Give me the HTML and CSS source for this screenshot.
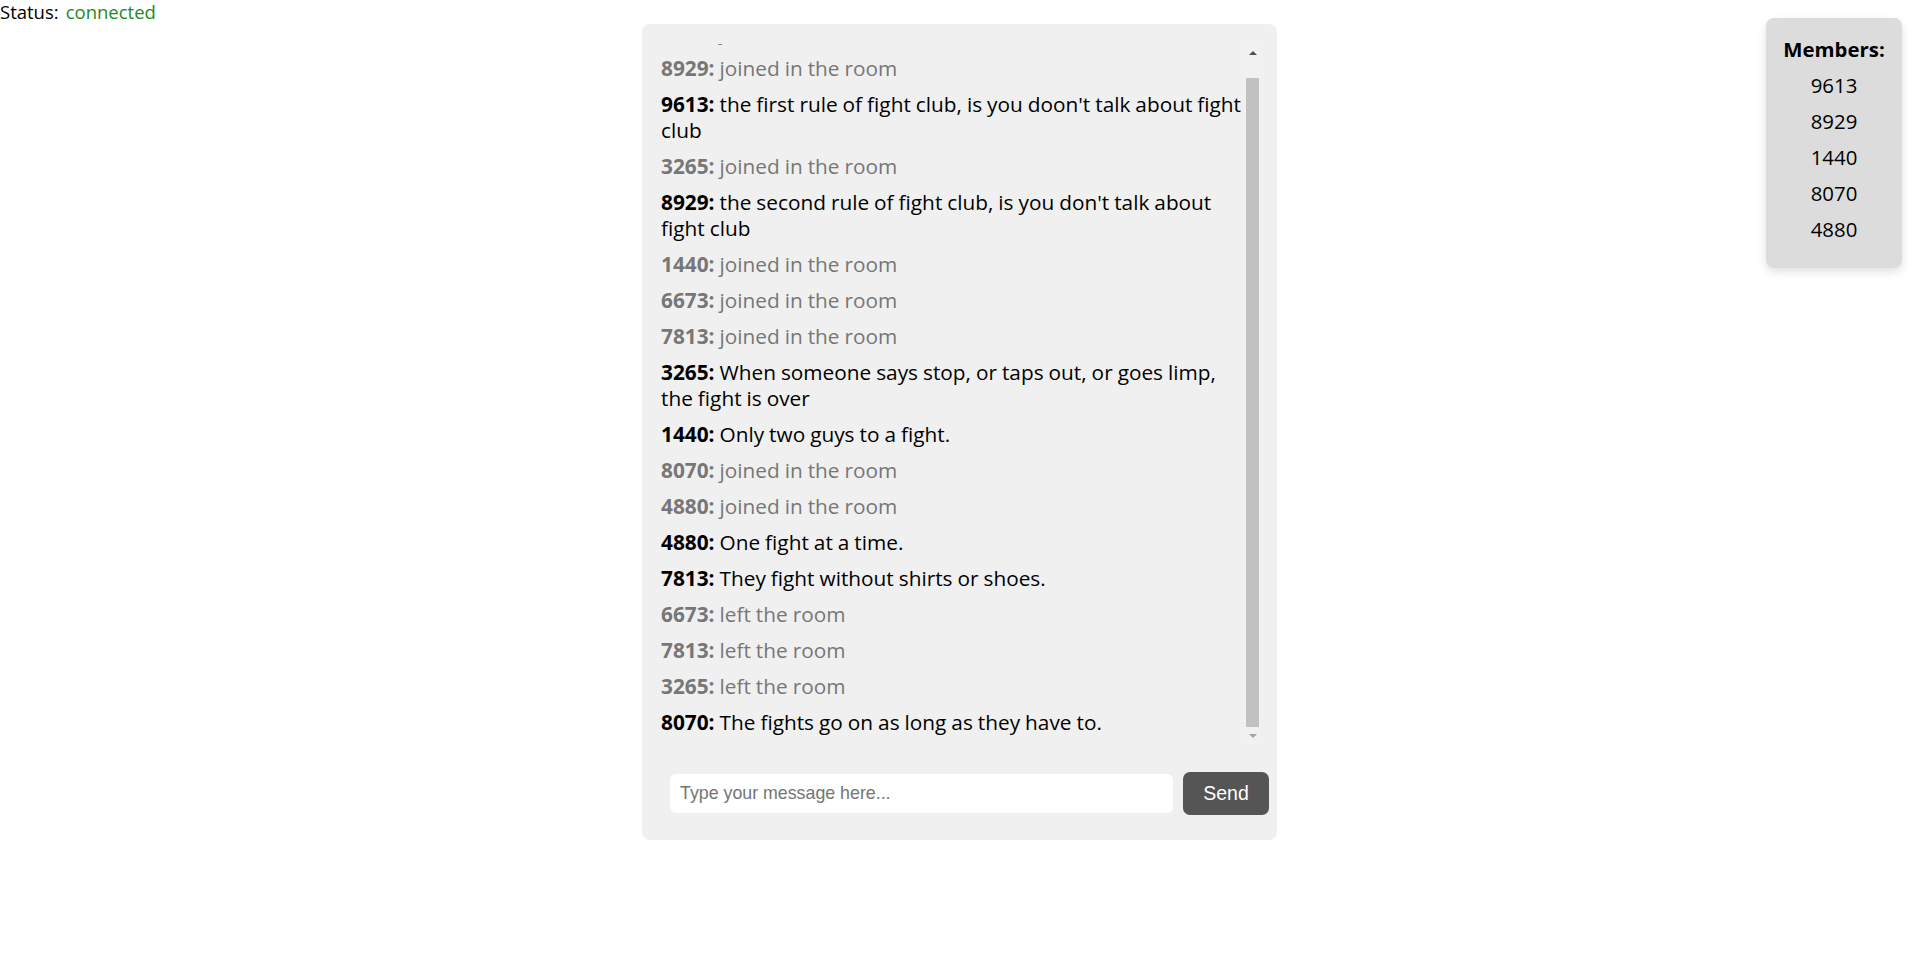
FILE: index.html
```html
<!DOCTYPE html>
<html lang="en">
<head>
<meta charset="utf-8">
<title>Chat</title>
<link rel="stylesheet" href="styles.css">
</head>
<body>
<div class="page">
  <div class="status">
    <span class="status-label">Status:</span>
    <span class="status-value">connected</span>
  </div>

  <main class="chat">
    <div class="log">
      <div class="messages">
        <div class="messages-inner">
          <div class="msg system"><b>9613:</b> joined in the room</div>
          <div class="msg system"><b>8929:</b> joined in the room</div>
          <div class="msg"><b>9613:</b> the first rule of fight club, is you doon't talk about fight club</div>
          <div class="msg system"><b>3265:</b> joined in the room</div>
          <div class="msg"><b>8929:</b> the second rule of fight club, is you don't talk about fight club</div>
          <div class="msg system"><b>1440:</b> joined in the room</div>
          <div class="msg system"><b>6673:</b> joined in the room</div>
          <div class="msg system"><b>7813:</b> joined in the room</div>
          <div class="msg"><b>3265:</b> When someone says stop, or taps out, or goes limp, the fight is over</div>
          <div class="msg"><b>1440:</b> Only two guys to a fight.</div>
          <div class="msg system"><b>8070:</b> joined in the room</div>
          <div class="msg system"><b>4880:</b> joined in the room</div>
          <div class="msg"><b>4880:</b> One fight at a time.</div>
          <div class="msg"><b>7813:</b> They fight without shirts or shoes.</div>
          <div class="msg system"><b>6673:</b> left the room</div>
          <div class="msg system"><b>7813:</b> left the room</div>
          <div class="msg system"><b>3265:</b> left the room</div>
          <div class="msg"><b>8070:</b> The fights go on as long as they have to.</div>
        </div>
      </div>
      <div class="scrollbar" aria-hidden="true">
        <div class="sb-btn"><span class="sb-arrow-up"></span></div>
        <div class="sb-track"><div class="sb-thumb"></div></div>
        <div class="sb-btn"><span class="sb-arrow-down"></span></div>
      </div>
    </div>
    <form class="composer">
      <input class="composer-input" type="text" placeholder="Type your message here...">
      <button class="composer-send" type="button">Send</button>
    </form>
  </main>

  <aside class="members">
    <div class="members-title">Members:</div>
    <div class="member">9613</div>
    <div class="member">8929</div>
    <div class="member">1440</div>
    <div class="member">8070</div>
    <div class="member">4880</div>
  </aside>
</div>
</body>
</html>
```

FILE: styles.css
```css
html, body {
  margin: 0;
  padding: 0;
  background: #ffffff;
}

body {
  font-family: "Open Sans", "Noto Sans", sans-serif;
  font-size: 18.5px;
  line-height: 26px;
  color: #000;
}

.page {
  display: grid;
  grid-template-columns: 1fr 635px 1fr;
  align-items: start;
  padding-left: 2px;
}

/* status */
.status {
  display: flex;
  gap: 7px;
  height: 24px;
  line-height: 24px;
  margin-left: -2px;
  white-space: nowrap;
}

.status-value {
  color: #228b22;
}

/* chat panel */
.chat {
  margin-top: 24px;
  box-sizing: border-box;
  width: 635px;
  padding: 20px 16px 25px 19px;
  background: #f0f0f0;
  border-radius: 8px;
}

.log {
  display: flex;
  height: 700px;
}

.messages {
  flex: 1;
  min-width: 0;
  overflow: hidden;
  display: flex;
  flex-direction: column-reverse;
  font-size: 20.8px;
  word-spacing: -0.4px;
}

.messages-inner {
  display: flex;
  flex-direction: column;
}

.msg {
  margin: 0 0 10px 0;
  line-height: 26px;
}

.msg:last-child {
  margin-bottom: 9px;
}

.msg b {
  font-weight: 700;
}

.msg.system {
  color: #777777;
}

/* scrollbar */
.scrollbar {
  width: 17px;
  flex: none;
  display: flex;
  flex-direction: column;
  background: #f1f1f1;
}

.sb-btn {
  height: 17px;
  flex: none;
  display: flex;
  align-items: center;
  justify-content: center;
}

.sb-arrow-up {
  width: 0;
  height: 0;
  border-left: 4px solid transparent;
  border-right: 4px solid transparent;
  border-bottom: 4px solid #505050;
}

.sb-arrow-down {
  width: 0;
  height: 0;
  border-left: 4px solid transparent;
  border-right: 4px solid transparent;
  border-top: 4px solid #a3a3a3;
}

.sb-track {
  flex: 1;
  display: flex;
  flex-direction: column;
}

.sb-thumb {
  flex: 1;
  margin: 17px 2px 0;
  background: #c1c1c1;
}

/* composer */
.composer {
  display: flex;
  align-items: center;
  gap: 10px;
  margin: 28px -8px 0 9px;
  height: 43px;
}

.composer-input {
  flex: 1;
  min-width: 0;
  height: 39px;
  box-sizing: border-box;
  border: none;
  border-radius: 6px;
  background: #ffffff;
  padding: 0 10px;
  font-family: "Liberation Sans", Arial, sans-serif;
  font-size: 17.8px;
  color: #000;
  outline: none;
}

.composer-input::placeholder {
  color: #757575;
}

.composer-send {
  width: 86px;
  height: 43px;
  border: none;
  border-radius: 7px;
  background: #555555;
  color: #ffffff;
  font-family: "Liberation Sans", Arial, sans-serif;
  font-size: 19.5px;
  padding: 0;
  cursor: pointer;
}

/* members */
.members {
  justify-self: end;
  margin: 18px 15px 0 0;
  box-sizing: border-box;
  width: 136px;
  padding: 18px 0 26px;
  background: #dcdcdc;
  border-radius: 8px;
  box-shadow: 0 4px 10px rgba(0, 0, 0, 0.12);
  text-align: center;
  font-size: 20.4px;
}

.members-title {
  font-weight: 700;
  margin-bottom: 10px;
}

.member {
  margin-bottom: 10px;
}

.member:last-child {
  margin-bottom: 0;
}
```
